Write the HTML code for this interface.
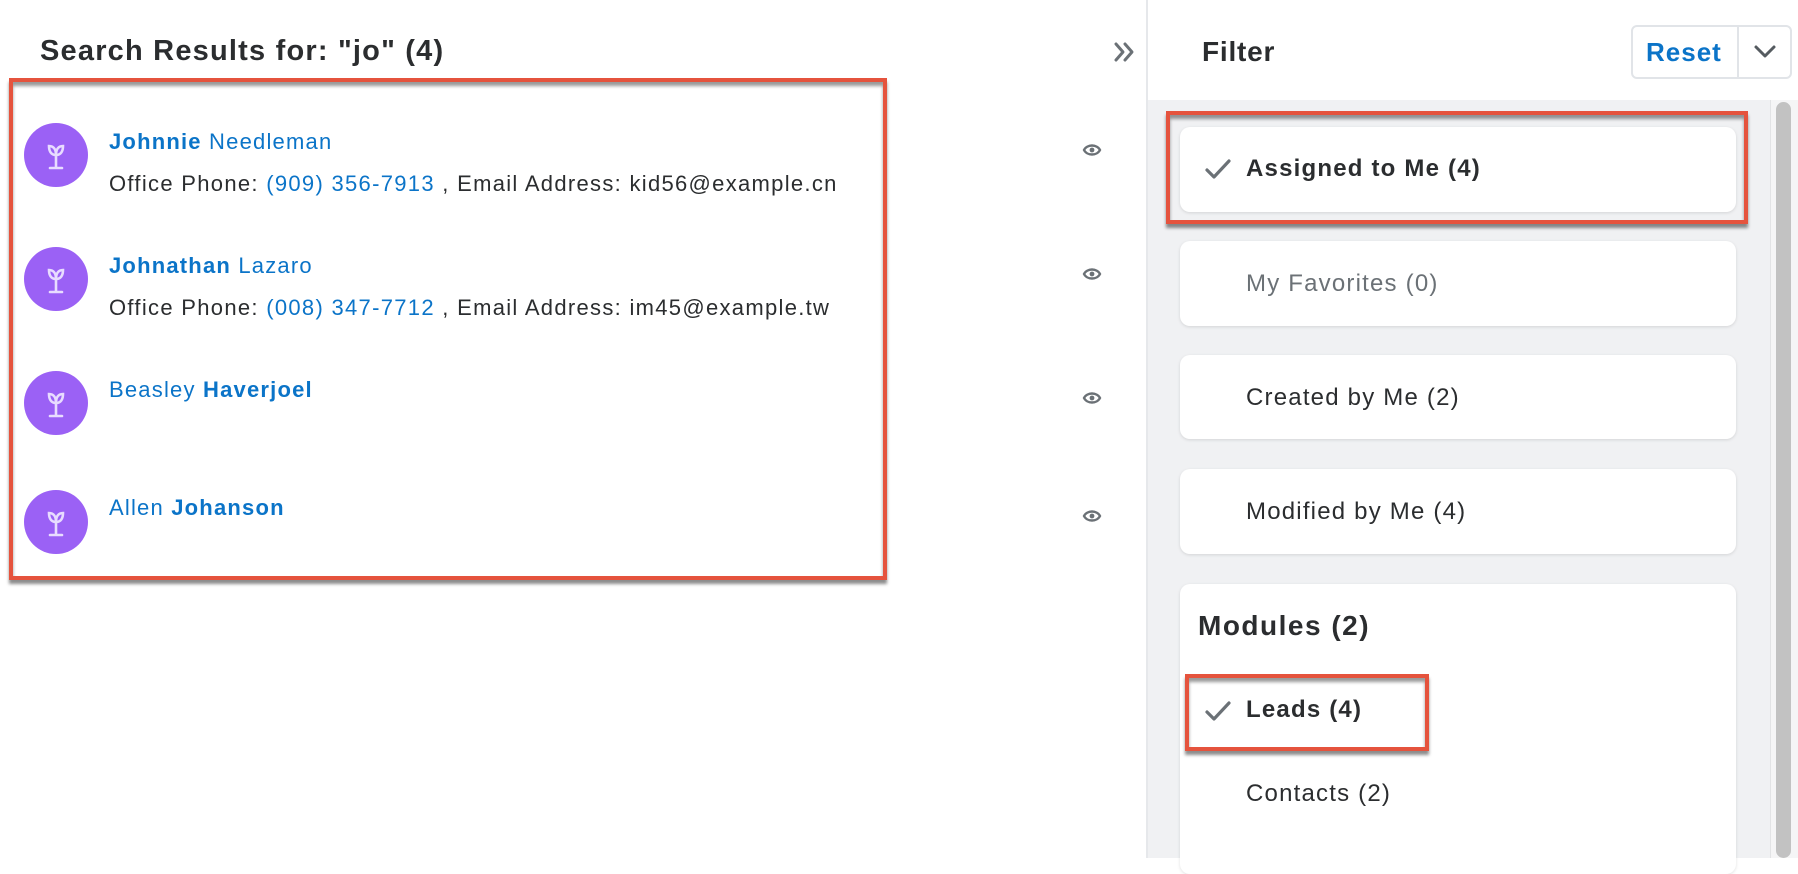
<!DOCTYPE html>
<html><head><meta charset="utf-8"><style>
*{margin:0;padding:0;box-sizing:border-box}
body{width:1798px;height:858px;overflow:hidden;background:#fff;font-family:"Liberation Sans",sans-serif;color:#2b2d2f;position:relative}
.a{position:absolute;white-space:nowrap}
.title{left:40px;top:35px;font-size:29px;letter-spacing:1.2px;font-weight:bold;color:#2b2d2f}
.rb{position:absolute;border:4px solid #e5533d;box-shadow:0 4px 3px rgba(0,0,0,.45), inset 0 4px 3px rgba(0,0,0,.4)}
.av{position:absolute;left:24px;width:64px;height:64px;border-radius:50%;background:#9b61f5}
.av svg{position:absolute;left:20px;top:18px}
.nm{left:109px;font-size:22px;letter-spacing:1.2px;color:#0b74c8}
.nm b{font-weight:bold}
.ln{left:109px;font-size:22px;letter-spacing:1.3px;color:#2b2d2f}
.ln span{color:#0b74c8}
.eye{position:absolute;left:1082px}
.card{position:absolute;left:1180px;width:556px;background:#fff;border-radius:10px;box-shadow:0 1px 3px rgba(0,0,0,.12)}
.ct{position:absolute;left:66px;font-size:24px;letter-spacing:1.2px;color:#2b2d2f}
.chk{position:absolute;left:24px}
</style></head><body>
<div class="a title">Search Results for: "jo" (4)</div>
<div class="rb" style="left:9px;top:78px;width:878px;height:502px"></div>

<div class="av" style="top:123px"><svg width="24" height="30" viewBox="0 0 24 30" fill="none" stroke="#e8dcff" stroke-width="2.6" stroke-linecap="round"><path d="M12 26V14M6 27h12M12 14C7 14 5 10 5 5c5 0 7 4 7 9M12 14c5 0 7-4 7-9-5 0-7 4-7 9"/></svg></div>
<div class="a nm" style="top:129px"><b>Johnnie</b> Needleman</div>
<div class="a ln" style="top:171px">Office Phone: <span>(909) 356-7913</span> , Email Address: kid56@example.cn</div>

<div class="av" style="top:247px"><svg width="24" height="30" viewBox="0 0 24 30" fill="none" stroke="#e8dcff" stroke-width="2.6" stroke-linecap="round"><path d="M12 26V14M6 27h12M12 14C7 14 5 10 5 5c5 0 7 4 7 9M12 14c5 0 7-4 7-9-5 0-7 4-7 9"/></svg></div>
<div class="a nm" style="top:253px"><b>Johnathan</b> Lazaro</div>
<div class="a ln" style="top:295px">Office Phone: <span>(008) 347-7712</span> , Email Address: im45@example.tw</div>

<div class="av" style="top:371px"><svg width="24" height="30" viewBox="0 0 24 30" fill="none" stroke="#e8dcff" stroke-width="2.6" stroke-linecap="round"><path d="M12 26V14M6 27h12M12 14C7 14 5 10 5 5c5 0 7 4 7 9M12 14c5 0 7-4 7-9-5 0-7 4-7 9"/></svg></div>
<div class="a nm" style="top:377px">Beasley <b>Haverjoel</b></div>

<div class="av" style="top:490px"><svg width="24" height="30" viewBox="0 0 24 30" fill="none" stroke="#e8dcff" stroke-width="2.6" stroke-linecap="round"><path d="M12 26V14M6 27h12M12 14C7 14 5 10 5 5c5 0 7 4 7 9M12 14c5 0 7-4 7-9-5 0-7 4-7 9"/></svg></div>
<div class="a nm" style="top:495px">Allen <b>Johanson</b></div>

<svg class="eye" style="top:140px" width="20" height="20" viewBox="0 0 20 20"><path d="M2 10C5 4 15 4 18 10 15 16 5 16 2 10Z" fill="none" stroke="#6b7176" stroke-width="2.4"/><circle cx="10" cy="10" r="2.4" fill="#6b7176"/></svg>
<svg class="eye" style="top:264px" width="20" height="20" viewBox="0 0 20 20"><path d="M2 10C5 4 15 4 18 10 15 16 5 16 2 10Z" fill="none" stroke="#6b7176" stroke-width="2.4"/><circle cx="10" cy="10" r="2.4" fill="#6b7176"/></svg>
<svg class="eye" style="top:388px" width="20" height="20" viewBox="0 0 20 20"><path d="M2 10C5 4 15 4 18 10 15 16 5 16 2 10Z" fill="none" stroke="#6b7176" stroke-width="2.4"/><circle cx="10" cy="10" r="2.4" fill="#6b7176"/></svg>
<svg class="eye" style="top:506px" width="20" height="20" viewBox="0 0 20 20"><path d="M2 10C5 4 15 4 18 10 15 16 5 16 2 10Z" fill="none" stroke="#6b7176" stroke-width="2.4"/><circle cx="10" cy="10" r="2.4" fill="#6b7176"/></svg>

<svg class="a" style="left:1112px;top:40px" width="24" height="24" viewBox="0 0 24 24" fill="none" stroke="#6b7176" stroke-width="3" stroke-linecap="round" stroke-linejoin="round"><path d="M4 4l7 8-7 8M13 4l7 8-7 8"/></svg>

<div class="a" style="left:1146px;top:0;width:2px;height:858px;background:#e6e8eb"></div>
<div class="a" style="left:1202px;top:36px;font-size:28px;letter-spacing:0.8px;font-weight:bold">Filter</div>
<div class="a" style="left:1631px;top:25px;width:161px;height:54px;border:2px solid #e1e4e8;border-radius:6px"></div>
<div class="a" style="left:1737px;top:26px;width:2px;height:52px;background:#e1e4e8"></div>
<div class="a" style="left:1646px;top:37px;font-size:26px;letter-spacing:1px;font-weight:bold;color:#0b74c8">Reset</div>
<svg class="a" style="left:1753px;top:42px" width="24" height="20" viewBox="0 0 24 20" fill="none" stroke="#555b60" stroke-width="3" stroke-linecap="round" stroke-linejoin="round"><path d="M3 5l9 9 9-9"/></svg>

<div class="a" style="left:1148px;top:100px;width:650px;height:758px;background:#f0f1f3"></div>
<div class="a" style="left:1770px;top:100px;width:28px;height:758px;background:#f5f5f6;border-left:1px solid #e2e3e5"></div>
<div class="a" style="left:1776px;top:102px;width:15px;height:756px;border-radius:8px;background:#c2c2c2"></div>

<div class="card" style="top:127px;height:85px"><svg class="chk" style="top:30px" width="28" height="24" viewBox="0 0 28 24" fill="none" stroke="#6b7176" stroke-width="3.2" stroke-linecap="round" stroke-linejoin="round"><path d="M3 13l7 7L25 4"/></svg><div class="ct" style="top:28px;font-weight:bold">Assigned to Me (4)</div></div>
<div class="rb" style="left:1166px;top:111px;width:582px;height:113px"></div>
<div class="card" style="top:241px;height:85px"><div class="ct" style="top:29px;color:#6b7176">My Favorites (0)</div></div>
<div class="card" style="top:355px;height:84px"><div class="ct" style="top:29px">Created by Me (2)</div></div>
<div class="card" style="top:469px;height:85px"><div class="ct" style="top:29px">Modified by Me (4)</div></div>
<div class="card" style="top:584px;height:290px"><div class="ct" style="left:18px;top:26px;font-size:28px;letter-spacing:1.5px;font-weight:bold">Modules (2)</div>
<svg class="chk" style="top:115px" width="28" height="24" viewBox="0 0 28 24" fill="none" stroke="#6b7176" stroke-width="3.2" stroke-linecap="round" stroke-linejoin="round"><path d="M3 13l7 7L25 4"/></svg>
<div class="ct" style="top:112px;font-weight:bold">Leads (4)</div>
<div class="ct" style="top:196px">Contacts (2)</div></div>
<div class="rb" style="left:1185px;top:674px;width:244px;height:77px"></div>
</body></html>
